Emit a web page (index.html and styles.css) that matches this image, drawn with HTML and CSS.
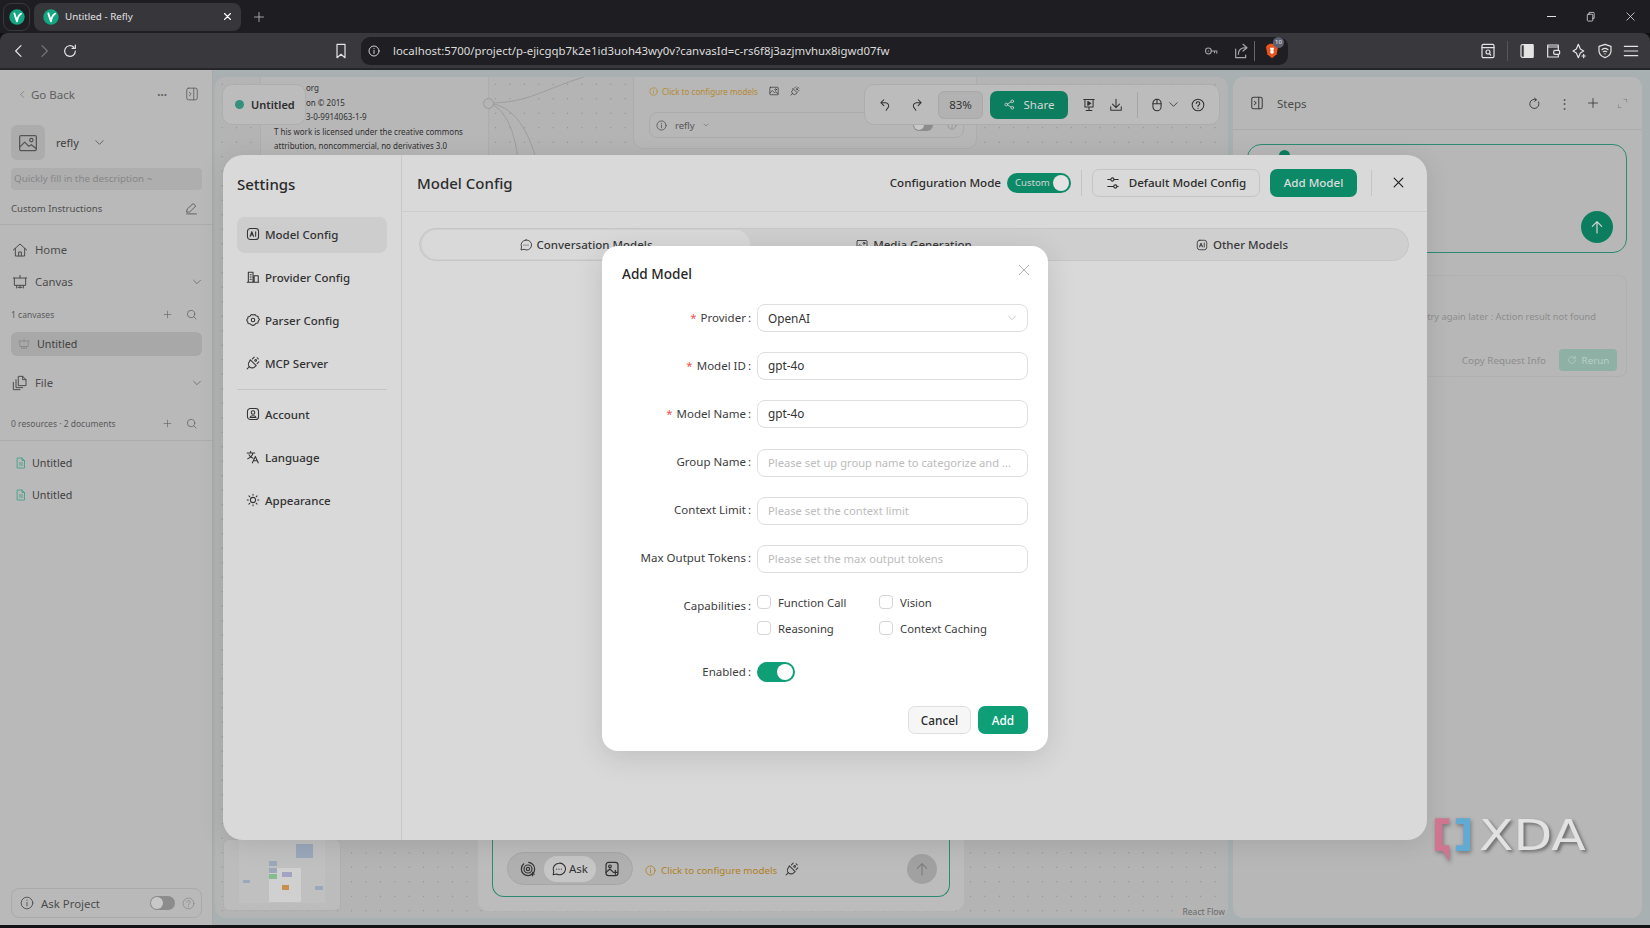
FILE: index.html
```html
<!DOCTYPE html>
<html lang="en">
<head>
<meta charset="utf-8">
<title>Untitled - Refly</title>
<link rel="stylesheet" href="styles.css">
</head>
<body>
<svg class="sprite" xmlns="http://www.w3.org/2000/svg">
<symbol id="back" viewBox="0 0 24 24"><path d="M15 4l-8 8 8 8"/></symbol>
<symbol id="fwd" viewBox="0 0 24 24"><path d="M9 4l8 8-8 8"/></symbol>
<symbol id="down" viewBox="0 0 24 24"><path d="M4 8l8 8 8-8"/></symbol>
<symbol id="reload" viewBox="0 0 24 24"><path d="M20 12a8 8 0 1 1-2.6-5.9M20 3v5h-5"/></symbol>
<symbol id="bookmark" viewBox="0 0 24 24"><path d="M6 2h12v20l-6-5-6 5z"/></symbol>
<symbol id="x" viewBox="0 0 24 24"><path d="M4 4l16 16M20 4L4 20"/></symbol>
<symbol id="plus" viewBox="0 0 24 24"><path d="M12 3v18M3 12h18"/></symbol>
<symbol id="search" viewBox="0 0 24 24"><circle cx="11" cy="11" r="8"/><path d="M17 17l5 5"/></symbol>
<symbol id="home" viewBox="0 0 24 24"><path d="M2 12l10-9 10 9M5 9.500V21h14V9.500M10 21v-6h4v6"/></symbol>
<symbol id="canvas" viewBox="0 0 24 24"><path d="M2 6h20M3.500 6v11h17V6M12 6V2M7 17v4M12 17v4M17 17v4M9 20h6"/></symbol>
<symbol id="files" viewBox="0 0 24 24"><path d="M10 2h6l5 5v9H10zM16 2v5h5M6 7v12h10M2 11v11h10"/></symbol>
<symbol id="doc" viewBox="0 0 24 24"><path d="M5 2h9l5 5v15H5zM14 2v5h5M8.500 12h7M8.500 16h7"/></symbol>
<symbol id="image" viewBox="0 0 24 24"><rect x="2" y="3" width="20" height="18" rx="1.500"/><circle cx="16" cy="8.500" r="2"/><path d="M2 17l6-6 5 5 3-2 6 5"/></symbol>
<symbol id="pencil" viewBox="0 0 24 24"><path d="M3 18l1-5L15 3l5 4.500L9 18zM3 22h18"/></symbol>
<symbol id="ai" viewBox="0 0 24 24"><rect x="2.500" y="2.500" width="19" height="19" rx="5"/><path d="M7 16l3-8 3 8M8 13.500h4M16.500 8v8"/></symbol>
<symbol id="provider" viewBox="0 0 24 24"><path d="M2 21h20M4 21V4h8v17M14 21V10h7v11M7 8h2M7 12h2M7 16h2"/></symbol>
<symbol id="parser" viewBox="0 0 24 24"><path d="M9 2.500l3 1 3-1 2.500 2.500 3 .5.500 3 2 2.500-2 3-.5 3-3 .5L15 20l-3 1.500L9 20l-2.500-1.500-3-.5-.5-3-2-3 2-2.500.5-3 3-.5z"/><circle cx="12" cy="12" r="3"/></symbol>
<symbol id="plug" viewBox="0 0 24 24"><path d="M2 22l4-4M7.500 6.500l10 10-2.500 2a6 6 0 0 1-9-9zM14 2l-3 3M22 10l-3 3M19 3l2 2"/><circle cx="16.500" cy="7.500" r="1.500"/></symbol>
<symbol id="account" viewBox="0 0 24 24"><rect x="2.500" y="2.500" width="19" height="19" rx="5"/><circle cx="12" cy="9.500" r="3"/><path d="M7 18c1-4 9-4 10 0z"/></symbol>
<symbol id="lang" viewBox="0 0 24 24"><path d="M2 5h13M8 2v3M12 5c-1 5-4 8-9 10M5 8c1 3 4 5 7 6M11 22l5-11 5 11M13 18.500h6"/></symbol>
<symbol id="sun" viewBox="0 0 24 24"><circle cx="12" cy="12" r="4.500"/><path d="M12 2v2M12 20v2M2 12h2M20 12h2M5 5l1.500 1.500M17.500 17.500L19 19M5 19l1.500-1.500M17.500 6.500L19 5"/></symbol>
<symbol id="sliders" viewBox="0 0 24 24"><path d="M3 6h5M14 6h7M3 18h10M19 18h2"/><circle cx="11" cy="6" r="2.800"/><circle cx="16" cy="18" r="2.800"/></symbol>
<symbol id="nodes" viewBox="0 0 24 24"><circle cx="18" cy="5" r="3"/><circle cx="5" cy="12" r="3"/><circle cx="18" cy="19" r="3"/><path d="M8 10.500l7.500-4M8 13.500l7.500 4"/></symbol>
<symbol id="undo" viewBox="0 0 24 24"><path d="M10 3L5 8l5 5M5 8h8a5.500 5.500 0 0 1 3 10l-2 3"/></symbol>
<symbol id="redo" viewBox="0 0 24 24"><path d="M14 3l5 5-5 5M19 8h-8a5.500 5.500 0 0 0-3 10l2 3"/></symbol>
<symbol id="present" viewBox="0 0 24 24"><path d="M3 2.500h18M5 2.500v13h14v-13M12 15.500V21M7 21.500h10"/><path class="solid" d="M10 6l5 3.200-5 3.200z"/></symbol>
<symbol id="download" viewBox="0 0 24 24"><path d="M12 2v14M6 10.500l6 6 6-6M3 15v6h18v-6"/></symbol>
<symbol id="mouse" viewBox="0 0 24 24"><rect x="5" y="2" width="14" height="20" rx="7"/><path d="M5 10h14M12 2v8"/></symbol>
<symbol id="help" viewBox="0 0 24 24"><circle cx="12" cy="12" r="10"/><path d="M9 9.500a3 3 0 1 1 4.500 2.600c-1 .6-1.500 1.200-1.500 2.400M12 17.500v.5"/></symbol>
<symbol id="panel" viewBox="0 0 24 24"><rect x="3" y="2" width="18" height="20" rx="3"/><path d="M15 2v20M7.500 9l3 3-3 3"/></symbol>
<symbol id="spin" viewBox="0 0 24 24"><path d="M19.500 9a8.500 8.500 0 1 1-4-4M12 2l3.500 3L12 8"/></symbol>
<symbol id="expand" viewBox="0 0 24 24"><path d="M3 21v-6M3 21h6M21 3h-6M21 3v6"/></symbol>
<symbol id="up" viewBox="0 0 24 24"><path d="M12 21V4M5 11l7-7 7 7"/></symbol>
<symbol id="info" viewBox="0 0 24 24"><circle cx="12" cy="12" r="10"/><path d="M12 11v6M12 7v.5"/></symbol>
<symbol id="key" viewBox="0 0 24 24"><circle cx="7.500" cy="12" r="5"/><path d="M12.500 12H22v4M18 12v3M7 12h1"/></symbol>
<symbol id="shareup" viewBox="0 0 24 24"><path d="M4 9v13h15v-4M8 17c0-7 4-10 12-10M15 2l6 5-6 5"/></symbol>
<symbol id="booksearch" viewBox="0 0 24 24"><rect x="3" y="2" width="18" height="20" rx="2"/><path d="M3 7h18"/><circle cx="12" cy="13.500" r="3"/><path d="M14 16l2 2"/></symbol>
<symbol id="sidepanel" viewBox="0 0 24 24"><rect x="3" y="2.500" width="18" height="19" rx="2"/><path class="solid" d="M8 2.500h13v19H8z"/></symbol>
<symbol id="wallet" viewBox="0 0 24 24"><path d="M20 6V3H4v18h16v-4M4 6h16v5"/><rect x="13" y="11" width="9" height="6" rx="2"/></symbol>
<symbol id="spark" viewBox="0 0 24 24"><path d="M11 2l3 7 5 3-5 3-3 7-3-7-5-3 5-3zM19 17v5M16.500 19.500h5"/></symbol>
<symbol id="shield" viewBox="0 0 24 24"><path d="M12 2l9 3v7c0 5-4 8-9 10-5-2-9-5-9-10V5z"/><path d="M7.500 10c3-2.500 6-2.500 9 0M9.500 13c1.500-1 3.500-1 5 0M12 16v.5"/></symbol>
<symbol id="menu" viewBox="0 0 24 24"><path d="M2 5h20M2 12h20M2 19h20"/></symbol>
<symbol id="restore" viewBox="0 0 24 24"><rect x="5" y="7" width="12" height="15" rx="2"/><path d="M9 7V3h9a2 2 0 0 1 2 2v11h-3"/></symbol>
<symbol id="chat" viewBox="0 0 24 24"><path d="M12 2a10 10 0 0 0-9 14l-1 6 6-1.500A10 10 0 1 0 12 2z"/><path d="M8 12v.5M12 12v.5M16 12v.5"/></symbol>
<symbol id="target" viewBox="0 0 24 24"><circle cx="12" cy="12" r="10" stroke-dasharray="40 8"/><circle cx="12" cy="12" r="6"/><circle cx="12" cy="12" r="2.500"/><path d="M19 17v5M16.500 19.500h5"/></symbol>
<symbol id="imgadd" viewBox="0 0 24 24"><rect x="3" y="2" width="18" height="20" rx="4"/><circle cx="9" cy="8" r="2"/><path d="M3 17l6-5 4 4M17 14v6M14 17h6"/></symbol>
<symbol id="logo" viewBox="0 0 24 24"><circle class="solid-teal" cx="12" cy="12" r="11.500"/><path class="leaf-line" d="M8 6.500c1 4 2.500 8 4 12 .5-5 2.500-9 6-11.500"/></symbol>
</svg>

<header class="tabbar">
  <div class="tabgroup"><svg class="i16 plain"><use href="#logo"/></svg></div>
  <div class="tab">
    <svg class="i16 plain"><use href="#logo"/></svg>
    <span class="tab-title">Untitled - Refly</span>
    <svg class="i9 tab-close"><use href="#x"/></svg>
  </div>
  <svg class="i12 newtab"><use href="#plus"/></svg>
  <div class="winctl">
    <span class="minimize"></span>
    <svg class="i11"><use href="#restore"/></svg>
    <svg class="i11"><use href="#x"/></svg>
  </div>
</header>

<nav class="toolbar">
  <svg class="i16 nav-back"><use href="#back"/></svg>
  <svg class="i16 nav-fwd"><use href="#fwd"/></svg>
  <svg class="i16 nav-reload"><use href="#reload"/></svg>
  <svg class="i16 nav-mark"><use href="#bookmark"/></svg>
  <div class="urlbar">
    <svg class="i12 info-solid"><use href="#info"/></svg>
    <span class="url">localhost:5700/project/p-ejicgqb7k2e1id3uoh43wy0v?canvasId=c-rs6f8j3azjmvhux8igwd07fw</span>
    <svg class="i14 dimicon"><use href="#key"/></svg>
    <svg class="i16 dimicon"><use href="#shareup"/></svg>
    <span class="urlsep"></span>
    <span class="brave"><svg class="i16 plain" viewBox="0 0 24 24"><path class="brave-s" d="M5 3l4-2h6l4 2 2 3-2 11-7 6-7-6L3 6z"/><path class="leaf" d="M9 7h6l-1 5 1 2-3 3-3-3 1-2z"/></svg><span class="badge">10</span></span>
  </div>
  <div class="tool-right">
    <svg class="i16"><use href="#booksearch"/></svg>
    <span class="tsep"></span>
    <svg class="i16"><use href="#sidepanel"/></svg>
    <svg class="i16"><use href="#wallet"/></svg>
    <svg class="i16"><use href="#spark"/></svg>
    <svg class="i16"><use href="#shield"/></svg>
    <svg class="i16"><use href="#menu"/></svg>
  </div>
</nav>

<div class="app">
  <aside class="sidebar">
    <div class="goback"><svg class="i9"><use href="#back"/></svg><span class="goback-t">Go Back</span><span class="grow"></span><span class="dots">···</span><svg class="i14"><use href="#panel"/></svg></div>
    <div class="project"><span class="avatar"><svg class="i20"><use href="#image"/></svg></span><span class="pname">refly</span><svg class="i11"><use href="#down"/></svg></div>
    <div class="desc">Quickly fill in the description ~</div>
    <div class="custom"><span>Custom Instructions</span><svg class="i13"><use href="#pencil"/></svg></div>
    <div class="side-section">
      <div class="sitem home"><svg class="i16"><use href="#home"/></svg><span>Home</span></div>
      <div class="sitem"><svg class="i16"><use href="#canvas"/></svg><span class="grow">Canvas</span><svg class="i10"><use href="#down"/></svg></div>
      <div class="count c1"><span class="grow">1 canvases</span><svg class="i9"><use href="#plus"/></svg><svg class="i11"><use href="#search"/></svg></div>
      <div class="canvas-row"><svg class="i12"><use href="#canvas"/></svg><span>Untitled</span></div>
      <div class="sitem file"><svg class="i16"><use href="#files"/></svg><span class="grow">File</span><svg class="i10"><use href="#down"/></svg></div>
      <div class="count c2"><span class="grow">0 resources · 2 documents</span><svg class="i9"><use href="#plus"/></svg><svg class="i11"><use href="#search"/></svg></div>
    </div>
    <div class="docs">
      <div class="docrow"><svg class="i12 green"><use href="#doc"/></svg><span>Untitled</span></div>
      <div class="docrow"><svg class="i12 green"><use href="#doc"/></svg><span>Untitled</span></div>
    </div>
    <div class="grow"></div>
    <div class="askproj"><svg class="i14"><use href="#info"/></svg><span class="grow">Ask Project</span><span class="mini-toggle"></span><svg class="i13 dim"><use href="#help"/></svg></div>
  </aside>

  <main class="workspace">
    <section class="canvas">
      <div class="node node1">
        <p class="cut">org</p><p class="cut">on © 2015</p><p class="cut">3-0-9914063-1-9</p>
        <p>T his work is licensed under the creative commons</p>
        <p>attribution, noncommercial, no derivatives 3.0</p>
      </div>
      <span class="port"></span>
      <svg class="edges" viewBox="0 0 170 120"><path d="M0 26C40 26 55 12 95 0M0 26C30 30 45 60 56 120M0 26C20 34 30 60 32 120"/></svg>
      <div class="node node2">
        <div class="warn"><svg class="i9"><use href="#info"/></svg><span>Click to configure models</span><svg class="i10 dark"><use href="#image"/></svg><svg class="i10 dark"><use href="#plug"/></svg></div>
        <div class="node2-input"><svg class="i11"><use href="#info"/></svg><span>refly</span><svg class="i6"><use href="#down"/></svg><span class="grow"></span><span class="mini-toggle small"></span><svg class="i10 dim"><use href="#help"/></svg></div>
      </div>
      <div class="titlepill"><span class="dot"></span><span>Untitled</span></div>
      <div class="floatbar">
        <svg class="i14"><use href="#undo"/></svg>
        <svg class="i14"><use href="#redo"/></svg>
        <span class="zoomval">83%</span>
        <span class="sharebtn"><svg class="i11"><use href="#nodes"/></svg>Share</span>
        <svg class="i14"><use href="#present"/></svg>
        <svg class="i14"><use href="#download"/></svg>
        <span class="fsep"></span>
        <span class="mousegroup"><svg class="i14"><use href="#mouse"/></svg><svg class="i11"><use href="#down"/></svg></span>
        <svg class="i14"><use href="#help"/></svg>
      </div>
      <div class="minimap">
        <div class="mm-inner">
          <span class="mm m9"></span><span class="mm m1"></span><span class="mm m2"></span><span class="mm m3"></span><span class="mm m4"></span><span class="mm m5"></span><span class="mm m6"></span><span class="mm m7"></span><span class="mm m8"></span>
        </div>
      </div>
      <div class="askcard">
        <div class="askinner">
          <div class="pillgroup">
            <svg class="i16"><use href="#target"/></svg>
            <span class="askpill"><svg class="i14"><use href="#chat"/></svg>Ask</span>
            <svg class="i16"><use href="#imgadd"/></svg>
          </div>
          <span class="askwarn"><svg class="i11"><use href="#info"/></svg>Click to configure models</span>
          <svg class="i14 dark"><use href="#plug"/></svg>
          <span class="grow"></span>
          <span class="sendbtn"><svg class="i16"><use href="#up"/></svg></span>
        </div>
      </div>
      <span class="reactflow">React Flow</span>
    </section>

    <section class="steps">
      <div class="steps-head"><svg class="i14"><use href="#panel"/></svg><span class="grow steps-t">Steps</span><svg class="i13"><use href="#spin"/></svg><span class="vdots">⋮</span><svg class="i12"><use href="#plus"/></svg><svg class="i11 dim step-exp"><use href="#expand"/></svg></div>
      <div class="stepcard"><span class="stepdot"></span><span class="stepsend"><svg class="i16"><use href="#up"/></svg></span></div>
      <div class="errcard">
        <div class="errmsg">Please try again later : Action result not found</div>
        <div class="erracts"><span>Copy Request Info</span><span class="rerun"><svg class="i10"><use href="#reload"/></svg>Rerun</span></div>
      </div>
    </section>
  </main>
</div>
<div class="screen-end"></div>

<div class="settings">
  <div class="set-side">
    <h2 class="set-title">Settings</h2>
    <div class="set-item active"><svg class="i14"><use href="#ai"/></svg>Model Config</div>
    <div class="set-item"><svg class="i14"><use href="#provider"/></svg>Provider Config</div>
    <div class="set-item"><svg class="i14"><use href="#parser"/></svg>Parser Config</div>
    <div class="set-item"><svg class="i14"><use href="#plug"/></svg>MCP Server</div>
    <div class="set-div"></div>
    <div class="set-item"><svg class="i14"><use href="#account"/></svg>Account</div>
    <div class="set-item"><svg class="i14"><use href="#lang"/></svg>Language</div>
    <div class="set-item"><svg class="i14"><use href="#sun"/></svg>Appearance</div>
  </div>
  <div class="set-main">
    <div class="set-head">
      <h1 class="set-h">Model Config</h1>
      <span class="grow"></span>
      <span class="cfg">Configuration Mode</span>
      <span class="cfg-toggle"><span>Custom</span><i class="knob"></i></span>
      <span class="hsep"></span>
      <span class="btn-default"><svg class="i14"><use href="#sliders"/></svg>Default Model Config</span>
      <span class="btn-add">Add Model</span>
      <span class="hsep second"></span>
      <svg class="i13 set-close"><use href="#x"/></svg>
    </div>
    <div class="tabs">
      <div class="tabitem on"><svg class="i12"><use href="#chat"/></svg>Conversation Models</div>
      <div class="tabitem"><svg class="i12"><use href="#image"/></svg>Media Generation</div>
      <div class="tabitem"><svg class="i12"><use href="#ai"/></svg>Other Models</div>
    </div>
  </div>
</div>

<div class="dialog">
  <div class="dlg-head"><h3>Add Model</h3><svg class="i14 dlg-x"><use href="#x"/></svg></div>
  <div class="frow"><label class="flabel"><em>*</em>Provider<b>:</b></label><div class="field select"><span>OpenAI</span><svg class="i10"><use href="#down"/></svg></div></div>
  <div class="frow"><label class="flabel"><em>*</em>Model ID<b>:</b></label><div class="field">gpt-4o</div></div>
  <div class="frow"><label class="flabel"><em>*</em>Model Name<b>:</b></label><div class="field">gpt-4o</div></div>
  <div class="frow"><label class="flabel">Group Name<b>:</b></label><div class="field ph">Please set up group name to categorize and ...</div></div>
  <div class="frow"><label class="flabel">Context Limit<b>:</b></label><div class="field ph">Please set the context limit</div></div>
  <div class="frow before-caps"><label class="flabel">Max Output Tokens<b>:</b></label><div class="field ph">Please set the max output tokens</div></div>
  <div class="frow caps-row"><label class="flabel caps-label">Capabilities<b>:</b></label>
    <div class="caps">
      <span class="cap"><i class="box"></i>Function Call</span>
      <span class="cap"><i class="box"></i>Vision</span>
      <span class="cap"><i class="box"></i>Reasoning</span>
      <span class="cap"><i class="box"></i>Context Caching</span>
    </div>
  </div>
  <div class="frow en-row"><label class="flabel">Enabled<b>:</b></label><span class="switch"><i class="knob"></i></span></div>
  <div class="dlg-actions"><span class="btn-cancel">Cancel</span><span class="btn-ok">Add</span></div>
</div>

<div class="xda">
  <svg class="xda-mark" viewBox="0 0 38 46"><path class="xda-red" d="M0 0h15v6H8v22.500h7V46L8 34.500H0z"/><path class="xda-blue" d="M22 0h15v34.500H22v-6h8V6h-8z"/></svg>
  <span class="xda-t">XDA</span>
</div>
</body>
</html>
```

FILE: styles.css
```css
* { box-sizing: border-box; }
html, body { margin: 0; height: 928px; width: 1650px; overflow: hidden; }
body { position: relative; display: flex; flex-direction: column; font-family: "Noto Sans", "Open Sans", sans-serif; color: #333; background: #111; }
h1, h2, h3, p { margin: 0; font-weight: 600; }
p { font-weight: 400; }
.sprite { display: none; }
svg { flex: none; fill: none; stroke: currentColor; stroke-width: 1.8; stroke-linecap: round; stroke-linejoin: round; }
.solid { fill: currentColor; }
.solid-teal { fill: #14a583; stroke: none; }
.leaf { fill: #fff; stroke: none; }
.leaf-line { stroke: #fff; stroke-width: 2.800; }
.plain { stroke: none; }
.grow { flex: 1; }
.i6 { width: 6px; height: 6px; } .i9 { width: 9px; height: 9px; } .i10 { width: 10px; height: 10px; }
.i11 { width: 11px; height: 11px; } .i12 { width: 12px; height: 12px; } .i13 { width: 13px; height: 13px; }
.i14 { width: 14px; height: 14px; } .i16 { width: 16px; height: 16px; } .i20 { width: 20px; height: 20px; }
.dim { color: #8b8b8b; }
.dark { color: #3c3c3c; }
.green { color: #2f9f7e; }

/* browser chrome */
.tabbar { height: 33px; background: #1e1e22; display: flex; align-items: center; padding: 0 0 0 3px; color: #d8d8d8; flex: none; }
.tabgroup { width: 27px; height: 28px; border: 1px solid #38383d; border-radius: 8px; display: flex; align-items: center; justify-content: center; }
.tab { width: 207px; height: 28px; margin-left: 4px; background: #36363b; border-radius: 8px; display: flex; align-items: center; padding: 0 9px 0 9px; }
.tab-title { flex: 1; font-size: 9.800px; margin-left: 6px; color: #e2e2e2; }
.tab-close { color: #fff; stroke-width: 3; }
.newtab { margin-left: 12px; color: #b0b0b0; }
.winctl { margin-left: auto; display: flex; align-items: center; gap: 29px; padding-right: 14px; }
.minimize { width: 9px; height: 1px; background: #e0e0e0; }
.toolbar { height: 37px; background: #38383d; border-bottom: 2px solid #26262a; border-radius: 8px 8px 0 0; display: flex; align-items: center; color: #e4e4e4; flex: none; padding-left: 11px; }
.nav-fwd { margin-left: 9px; color: #77777b; }
.nav-reload { margin-left: 10px; }
.nav-mark { margin-left: 255px; }
.urlbar { margin-left: 12px; width: 927px; height: 28px; background: #1f1f23; border-radius: 9px; display: flex; align-items: center; padding: 0 8px 0 7px; }
.info-solid { color: #e4e4e4; }
.url { flex: 1; font-size: 11.400px; margin-left: 13px; color: #dcdcdc; white-space: nowrap; }
.dimicon { color: #a5a5a8; margin-right: 15px; }
.dimicon + .dimicon { margin-right: 11px; }
.urlsep { width: 1px; height: 20px; background: #666; margin: 0 9px 0 -6px; }
.brave { position: relative; display: flex; }
.brave-s { fill: #e8541d; }
.badge { position: absolute; left: 9px; top: -6px; width: 11px; height: 11px; border-radius: 50%; background: #5d6070; color: #eee; font-size: 6px; line-height: 11px; text-align: center; }
.tool-right { margin-left: 192px; display: flex; align-items: center; gap: 10px; }
.tsep { width: 1px; height: 20px; background: #55555a; margin: 0 1px 0 1px; }

/* app frame */
.app { height: 855px; flex: none; display: flex; background: #a8b0b2; }
.screen-end { flex: 1; background: #141416; }
.sidebar { width: 213px; flex: none; background: #b9b9b9; border-right: 1px solid #a9a9a9; padding: 0 10px 7px 11px; display: flex; flex-direction: column; color: #4c4c4c; font-size: 11.500px; }
.sidebar svg { stroke-width: 1.500; }
.goback { height: 48px; display: flex; align-items: center; padding: 0 0 0 7px; color: #606060; }
.goback > svg:last-child { margin-right: 3px; }
.goback-t { margin-left: 4px; }
.dots { margin-right: 18px; font-weight: 700; }
.project { height: 35px; margin-top: 7px; display: flex; align-items: center; color: #3e3e3e; }
.avatar { width: 34px; height: 35px; border-radius: 6px; background: #acacac; display: flex; align-items: center; justify-content: center; color: #555; }
.pname { margin: 0 15px 0 11px; font-size: 11px; }
.desc { height: 22px; margin-top: 8px; background: #aeaeae; border-radius: 4px; font-size: 9.800px; line-height: 22px; padding-left: 3px; color: #878787; }
.custom { height: 35px; font-size: 9.600px; display: flex; align-items: center; justify-content: space-between; color: #4f4f4f; border-bottom: 1px solid #acacac; margin: 0 -10px 0 -11px; padding: 2px 14px 0 11px; }
.sitem { display: flex; align-items: center; height: 32px; gap: 7px; font-size: 11.300px; padding: 0 0 1px 1px; }
.sitem.home { margin-top: 9px; }
.sitem.file { margin-top: 11px; }
.count { display: flex; align-items: center; gap: 12px; font-size: 8.500px; color: #5a5a5a; padding-right: 5px; }
.count svg:first-of-type { margin-right: 2px; }
.c1 { height: 33px; }
.c2 { height: 34px; margin-top: 7px; }
.canvas-row { height: 24px; background: #a8a8a8; border-radius: 6px; display: flex; align-items: center; gap: 7px; padding-left: 7px; margin-top: 1px; font-size: 10.700px; color: #404040; }
.canvas-row svg { color: #868686; }
.docs { border-top: 1px solid #acacac; margin: 0 -10px 0 -11px; padding: 6px 0 0 15px; }
.docrow { height: 32px; display: flex; align-items: center; gap: 5px; font-size: 10.700px; color: #404040; }
.askproj { height: 30px; border: 1px solid #aaa; border-radius: 8px; display: flex; align-items: center; padding: 0 6px 0 8px; gap: 7px; font-size: 11.400px; color: #4c4c4c; }
.mini-toggle { width: 25px; height: 14px; border-radius: 7px; background: #8c8c8c; position: relative; }
.mini-toggle::before { content: ""; position: absolute; left: 1px; top: 1px; width: 12px; height: 12px; border-radius: 50%; background: #c8c8c8; }
.mini-toggle.small { width: 20px; height: 12px; margin-right: 6px; }
.mini-toggle.small::before { width: 10px; height: 10px; }

.workspace { flex: 1; display: flex; gap: 5px; padding: 7px 8px 7px 2px; min-width: 0; }
.canvas { width: 1013px; flex: none; position: relative; overflow: hidden; border-radius: 10px; background-color: #b4b4b4; background-image: radial-gradient(circle at center, #878787 .6px, transparent .9px); background-size: 14.400px 14.500px; }
.node { position: absolute; background: #b7b7b7; border: 1px solid #adadad; border-radius: 10px; }
.node1 { left: 45px; top: -20px; width: 229px; height: 120px; padding: 24px 0 0 13px; font-size: 8px; line-height: 14.500px; color: #303030; border-radius: 0; border-top: 0; border-bottom: 0; }
.cut { padding-left: 32px; }
.port { position: absolute; left: 268px; top: 21px; width: 11px; height: 11px; border-radius: 50%; border: 1.500px solid #9b9b9b; background: #b4b4b4; z-index: 2; }
.edges { position: absolute; left: 274px; top: 0; width: 170px; height: 120px; stroke: #9d9d9d; stroke-width: 1; }
.node2 { left: 418px; top: -10px; width: 344px; height: 82px; padding: 16px 12px 0 15px; }
.warn { display: flex; align-items: center; gap: 4px; font-size: 8.100px; color: #b58a30; height: 14px; }
.warn span { margin-right: 7px; }
.warn .dark + .dark { margin-left: 7px; }
.node2-input { margin-top: 14px; height: 26px; border: 1px solid #ababab; border-radius: 8px; display: flex; align-items: center; gap: 8px; padding: 0 6px 0 6px; font-size: 9.500px; color: #565656; }
.titlepill { position: absolute; left: 7px; top: 7px; width: 84px; height: 41px; background: #bcbcbc; border: 1px solid #aeaeae; border-radius: 10px; display: flex; align-items: center; gap: 7px; padding-left: 12px; font-size: 11px; font-weight: 600; color: #2d2d2d; }
.dot { width: 9px; height: 9px; border-radius: 50%; background: #35907c; }
.floatbar { position: absolute; left: 649px; top: 7px; width: 356px; height: 41px; background: #bcbcbc; border: 1px solid #adadad; border-radius: 10px; display: flex; align-items: center; padding-left: 13px; color: #333; }
.floatbar > svg:nth-child(2) { margin-left: 18px; }
.zoomval { width: 45px; height: 28px; margin-left: 14px; background: #b2b2b2; border: 1px solid #a8a8a8; border-radius: 6px; font-size: 11.500px; line-height: 26px; text-align: center; }
.sharebtn { width: 78px; height: 28px; margin-left: 7px; margin-right: 14px; background: #0c7e5f; border-radius: 7px; color: #d6d6d6; font-size: 11.500px; display: flex; align-items: center; justify-content: center; gap: 9px; }
.floatbar > svg:nth-of-type(4) { margin-left: 13px; }
.fsep { width: 1px; height: 26px; background: #a5a5a5; margin: 0 12px 0 14px; }
.mousegroup { display: flex; align-items: center; gap: 4px; margin-right: 12px; }
.minimap { position: absolute; left: 8px; bottom: 7px; width: 118px; height: 72px; background: #bcbcbc; border-radius: 6px; border: 1px solid #b0b0b0; padding: 0 15px 7px; }
.mm-inner { position: relative; height: 100%; background: #c0c0c0; }
.mm { position: absolute; background: #9aa8ba; }
.m1 { left: 57px; top: 4px; width: 17px; height: 14px; }
.m2 { left: 30px; top: 21px; width: 8px; height: 5px; }
.m3 { left: 30px; top: 28px; width: 8px; height: 5px; }
.m4 { left: 30px; top: 34px; width: 8px; height: 5px; background: #86bd8e; }
.m5 { left: 43px; top: 32px; width: 10px; height: 5px; background: #a3a3c4; }
.m6 { left: 43px; top: 45px; width: 7px; height: 5px; background: #c89050; }
.m7 { left: 4px; top: 40px; width: 7px; height: 3px; }
.m8 { left: 76px; top: 46px; width: 8px; height: 4px; }
.m9 { left: 30px; top: 28px; width: 32px; height: 34px; background: #d0d0d0; }
.askcard { position: absolute; left: 263px; bottom: 7px; width: 486px; height: 120px; background: #bcbcbc; border-radius: 10px; padding: 0 14px 14px; display: flex; }
.askinner { flex: 1; border: 1px solid #2d8b73; border-top: 0; border-radius: 0 0 12px 12px; display: flex; align-items: flex-end; padding: 0 12px 11px 14px; font-size: 12px; color: #333; }
.pillgroup { width: 126px; height: 33px; background: #b0b0b0; border: 1px solid #a6a6a6; border-radius: 17px; display: flex; align-items: center; padding: 0 12px; justify-content: space-between; }
.askpill { height: 26px; width: 52px; background: #c6c6c6; border-radius: 13px; display: flex; align-items: center; justify-content: center; gap: 3px; font-size: 11.500px; color: #333; }
.askwarn { margin: 0 8px 8px 12px; display: flex; align-items: center; gap: 5px; font-size: 9.800px; color: #b07f22; white-space: nowrap; }
.askinner > .dark { margin-bottom: 9px; }
.sendbtn { width: 30px; height: 30px; border-radius: 50%; background: #a1a1a1; color: #7f7f7f; display: flex; align-items: center; justify-content: center; margin-bottom: 1px; }
.reactflow { position: absolute; right: 3px; bottom: 1px; font-size: 8.500px; color: #6b6b6b; }

.steps { flex: 1; background: #b7b7b7; border-radius: 10px; min-width: 0; }
.steps-head { height: 53px; display: flex; align-items: center; padding: 0 14px 0 17px; border-bottom: 1px solid #acacac; font-size: 11.500px; color: #3f3f3f; gap: 15px; }
.steps-t { margin-left: -2px; color: #4a4a4a; }
.vdots { font-size: 13px; color: #555; width: 16px; text-align: center; }
.step-exp { margin-left: 3px; }
.stepcard { position: relative; height: 109px; margin: 14px 15px 0 14px; border: 1px solid #2d8b73; border-radius: 14px; }
.stepdot { position: absolute; left: 31px; top: 5px; width: 11px; height: 11px; border-radius: 50%; background: #0c7e5f; }
.stepsend { position: absolute; right: 13px; bottom: 9px; width: 32px; height: 32px; border-radius: 50%; background: #0c7e5f; color: #d5d5d5; display: flex; align-items: center; justify-content: center; }
.errcard { height: 102px; margin: 22px 15px 0 14px; border: 1px solid #b0b0b0; border-radius: 8px; display: flex; flex-direction: column; align-items: flex-end; padding: 33px 9px 0 0; color: #8d8d8d; }
.errmsg { height: 16px; line-height: 16px; margin-right: 21px; white-space: nowrap; font-size: 9.300px; }
.erracts { display: flex; align-items: center; gap: 13px; margin-top: 24px; font-size: 9.800px; }
.rerun { width: 58px; height: 22px; background: #8fb0a5; border-radius: 4px; color: #b9cfc8; display: flex; align-items: center; justify-content: center; gap: 5px; }

/* settings overlay */
.settings { position: absolute; left: 223px; top: 155px; width: 1204px; height: 685px; background: #d9d9d9; border-radius: 20px; display: flex; box-shadow: 0 4px 26px rgba(0,0,0,.1); }
.set-side { width: 179px; flex: none; border-right: 1px solid #c8c8c8; padding: 0 14px; }
.set-title { font-size: 15px; line-height: 22px; padding-top: 18px; color: #2a2a2a; margin-bottom: 22px; font-weight: 500; }
.set-item { height: 36px; display: flex; align-items: center; gap: 5px; padding: 0 0 2px 9px; margin-bottom: 7px; border-radius: 8px; font-size: 11.500px; font-weight: 500; color: #333; }
.set-item.active { background: #cdcdcd; }
.set-div { height: 1px; background: #c6c6c6; margin: 0 0 7px; }
.set-main { flex: 1; min-width: 0; display: flex; flex-direction: column; }
.set-head { height: 57px; border-bottom: 1px solid #cdcdcd; display: flex; align-items: center; padding: 0 22px 1px 15px; flex: none; font-size: 11.600px; color: #2d2d2d; }
.set-h { font-size: 15px; font-weight: 500; }
.cfg { font-weight: 500; }
.cfg-toggle { margin-left: 6px; width: 64px; height: 20px; border-radius: 10px; background: #0c8a68; color: #d3d3d3; font-size: 9.600px; display: flex; align-items: center; padding: 0 2px 0 8px; justify-content: space-between; }
.cfg-toggle .knob { width: 16px; height: 16px; }
.knob { display: block; border-radius: 50%; background: #e3e3e3; }
.hsep { width: 1px; height: 26px; background: #c5c5c5; margin: 0 10px; }
.hsep.second { margin: 0 20px 0 14px; }
.btn-default { width: 168px; height: 28px; border: 1px solid #c5c5c5; border-radius: 7px; display: flex; align-items: center; justify-content: center; gap: 9px; font-weight: 500; }
.btn-add { width: 87px; height: 28px; margin-left: 10px; background: #0c8a68; border-radius: 7px; color: #dcdcdc; font-weight: 500; line-height: 28px; text-align: center; }
.set-close { color: #222; stroke-width: 2.200; }
.tabs { height: 33px; margin: 16px 18px 0 17px; background: #cfcfcf; border: 1px solid #c6c6c6; border-radius: 17px; display: flex; align-items: center; flex: none; padding: 0 2px; }
.tabitem { flex: 1; height: 29px; display: flex; align-items: center; justify-content: center; gap: 5px; font-size: 11.500px; font-weight: 500; color: #3a3a3a; border-radius: 15px; }
.tabitem.on { background: #d9d9d9; }

/* dialog */
.dialog { position: absolute; left: 602px; top: 246px; width: 446px; height: 505px; background: #fff; border-radius: 16px; padding: 18px 20px 0 20px; box-shadow: 0 6px 30px rgba(0,0,0,.12); }
.dlg-head { height: 20px; margin-bottom: 20px; display: flex; justify-content: space-between; }
.dlg-head h3 { font-size: 13.600px; line-height: 20px; font-weight: 500; color: #262626; }
.dlg-x { color: #9a9a9a; margin: -1px -3px 0 0; stroke-width: 1.300; }
.frow { display: flex; height: 28px; margin-bottom: 20.200px; align-items: center; }
.flabel { width: 129px; flex: none; text-align: right; font-size: 11.500px; line-height: 16px; color: #3d3d3d; margin: -1px 6px 0 0; white-space: nowrap; }
.flabel b { font-weight: 400; margin-left: 2px; }
.flabel em { font-style: normal; color: #ef5350; margin-right: 4px; }
.field { flex: 1; height: 28px; border: 1px solid #dedede; border-radius: 8px; font-size: 11.800px; line-height: 25px; padding: 0 10px; color: #333; white-space: nowrap; overflow: hidden; }
.field.ph { color: #bcbcbc; font-size: 11.200px; }
.field.select { display: flex; align-items: center; justify-content: space-between; }
.field.select svg { color: #b5b5b5; }
.before-caps { margin-bottom: 17.400px; }
.caps-row { height: 50px; margin-bottom: 22px; align-items: flex-start; }
.caps-label { margin-top: 8px; }
.caps { flex: 1; display: grid; grid-template-columns: 122px 1fr; grid-auto-rows: 24px; row-gap: 2px; }
.cap { display: flex; align-items: center; gap: 7px; font-size: 11.300px; color: #3d3d3d; }
.box { width: 14px; height: 14px; border: 1px solid #d5d5d5; border-radius: 4px; flex: none; }
.en-row { height: 20px; margin-bottom: 24px; }
.switch { width: 38px; height: 20px; border-radius: 10px; background: #0e9f77; display: flex; align-items: center; justify-content: flex-end; padding-right: 2px; }
.switch .knob { width: 16px; height: 16px; background: #fff; }
.dlg-actions { display: flex; justify-content: flex-end; gap: 7px; }
.btn-cancel { width: 63px; height: 28px; border: 1px solid #dfdfdf; border-radius: 7px; background: #f6f6f6; font-size: 11.800px; font-weight: 500; line-height: 26px; text-align: center; color: #2c2c2c; }
.btn-ok { width: 50px; height: 28px; background: #0e9f77; border-radius: 7px; color: #fff; font-size: 11.800px; font-weight: 500; line-height: 28px; text-align: center; }

/* watermark */
.xda { position: absolute; left: 1435px; top: 818px; display: flex; align-items: flex-start; gap: 8px; }
.xda-mark { width: 36px; height: 44px; stroke: none; filter: drop-shadow(1px 2px 2px rgba(0,0,0,.35)); }
.xda-red { fill: #cf7590; }
.xda-blue { fill: #60aad4; }
.xda-t { font-family: "DejaVu Sans", sans-serif; font-size: 43px; line-height: 34px; color: #e2e2e2; text-shadow: 2px 2px 3px rgba(0,0,0,.4); transform: scaleX(1.170); transform-origin: left center; }
```
